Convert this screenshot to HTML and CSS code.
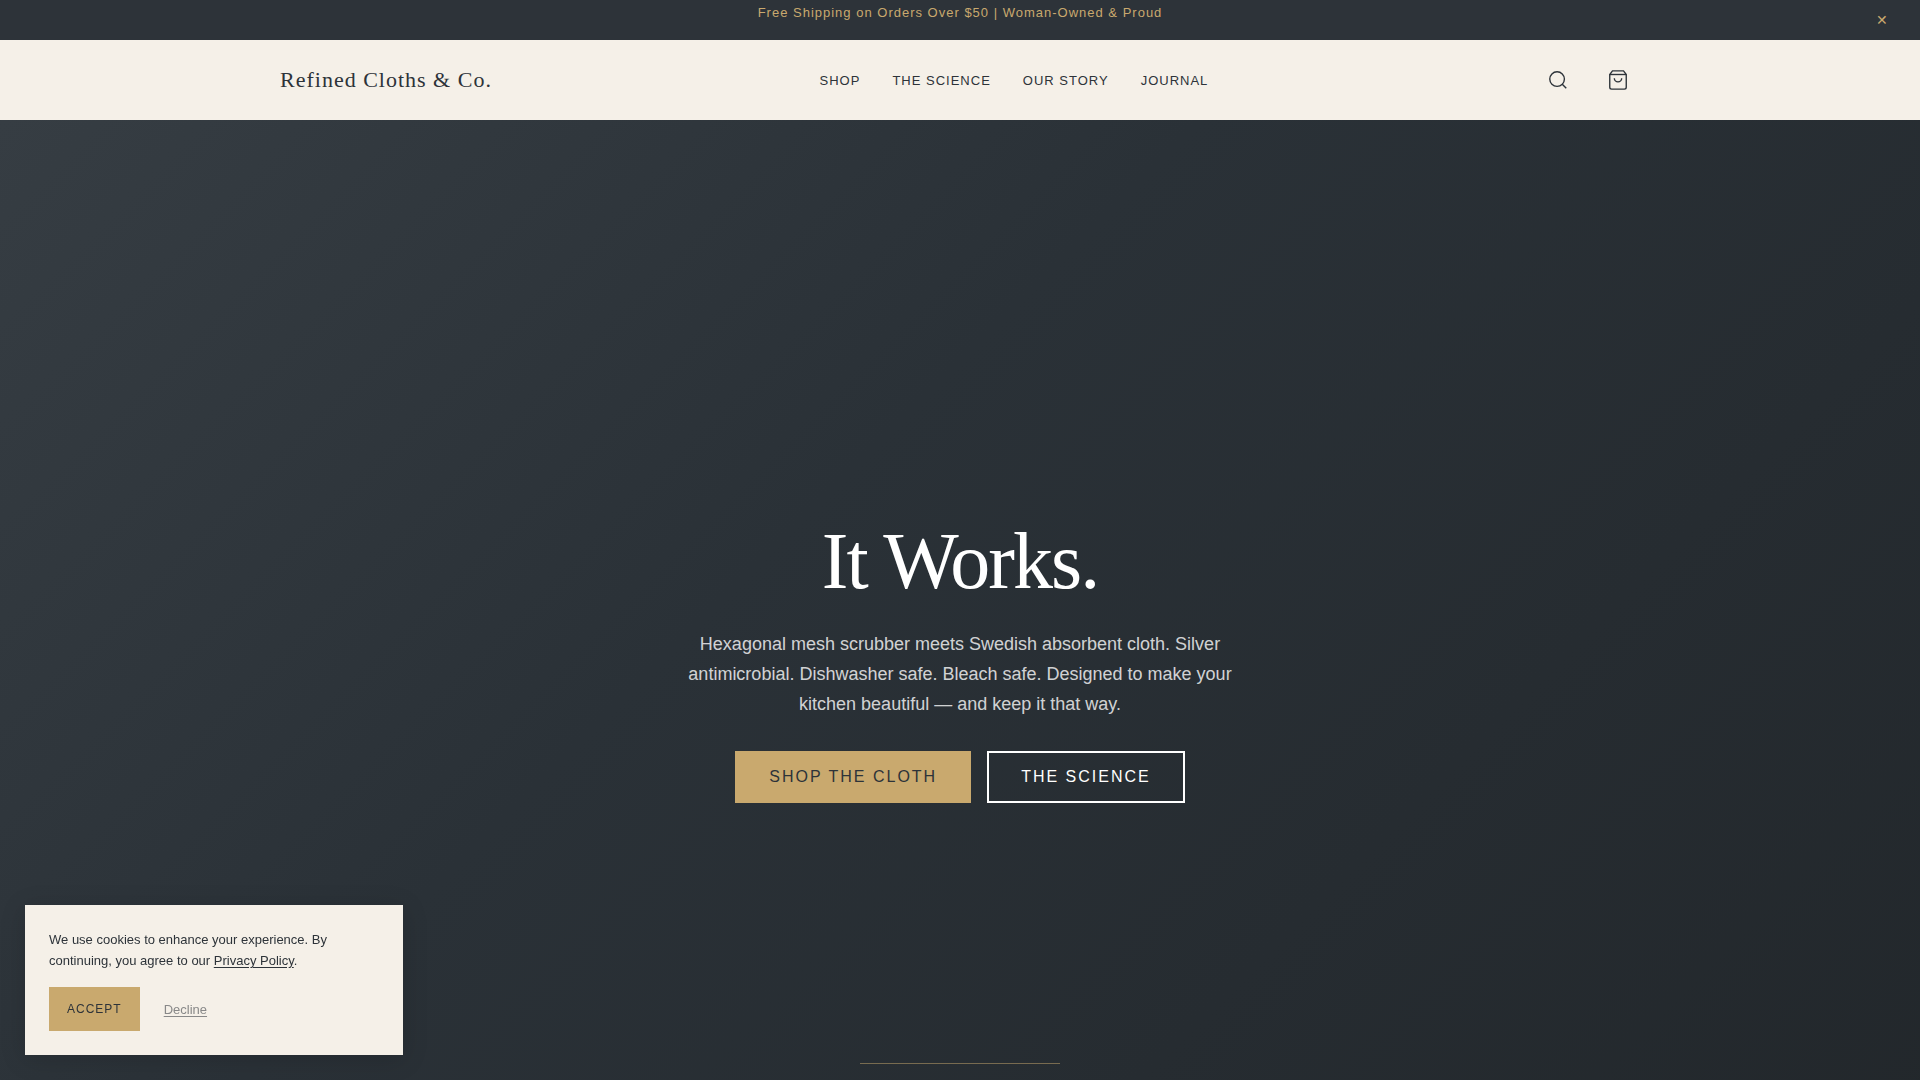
FILE: index.html
```html
<!DOCTYPE html>
<html lang="en">
<head>
    <meta charset="utf-8">
    <meta name="viewport" content="width=device-width, initial-scale=1.0">
    <title>Refined Cloths &amp; Co.</title>
    <link rel="stylesheet" href="styles.css">
</head>
<body>
<div class="announcement">
    <p>Free Shipping on Orders Over $50 | Woman-Owned &amp; Proud</p>
    <button class="announcement-close" type="button" aria-label="Close announcement">&#10005;</button>
</div>

<header class="header">
    <div class="header-inner">
        <a class="logo" href="#">Refined Cloths &amp; Co.</a>
        <nav class="nav">
            <a href="#">Shop</a>
            <a href="#">The Science</a>
            <a href="#">Our Story</a>
            <a href="#">Journal</a>
        </nav>
        <div class="header-actions">
            <button class="icon-btn" type="button" aria-label="Search">
                <svg viewBox="0 0 24 24"><circle cx="11" cy="11" r="8"/><path d="M21 21l-4.35-4.35"/></svg>
            </button>
            <button class="icon-btn" type="button" aria-label="Cart">
                <svg viewBox="0 0 24 24"><path d="M6 2L3 6v14a2 2 0 0 0 2 2h14a2 2 0 0 0 2-2V6l-3-4z"/><path d="M3 6h18"/><path d="M16 10a4 4 0 0 1-8 0"/></svg>
            </button>
        </div>
    </div>
</header>

<main class="hero">
    <div class="hero-content">
        <h1>It Works.</h1>
        <p>Hexagonal mesh scrubber meets Swedish absorbent cloth. Silver antimicrobial. Dishwasher safe. Bleach safe. Designed to make your kitchen beautiful — and keep it that way.</p>
        <div class="hero-buttons">
            <a class="btn btn-primary" href="#">Shop the Cloth</a>
            <a class="btn btn-secondary" href="#">The Science</a>
        </div>
    </div>
    <hr class="hero-line">
</main>

<aside class="cookie-banner" aria-label="Cookie notice">
    <p>We use cookies to enhance your experience. By continuing, you agree to our <a href="#">Privacy Policy</a>.</p>
    <div class="cookie-actions">
        <button class="cookie-accept" type="button">Accept</button>
        <button class="cookie-decline" type="button">Decline</button>
    </div>
</aside>
</body>
</html>
```
FILE: styles.css
```css
:root {
    --charcoal: #2d3339;
    --cream: #f5f0e8;
    --gold: #c9a96e;
    --sans: "Liberation Sans", Arial, sans-serif;
    --serif: "Liberation Serif", "Times New Roman", serif;
}

* {
    box-sizing: border-box;
    margin: 0;
    padding: 0;
}

body {
    display: flex;
    flex-direction: column;
    min-height: 100vh;
    font-family: var(--sans);
    color: var(--charcoal);
    background: var(--cream);
}

button {
    font-family: inherit;
    color: inherit;
    background: none;
    border: none;
    cursor: pointer;
}

/* Announcement bar */
.announcement {
    position: relative;
    height: 40px;
    background: var(--charcoal);
    color: var(--gold);
    font-size: 13px;
    line-height: 26px;
    letter-spacing: 1px;
    text-align: center;
}

.announcement-close {
    position: absolute;
    top: 0;
    right: 16px;
    width: 44px;
    height: 40px;
    font-size: 14px;
}

/* Header */
.header {
    padding: 0 24px;
    background: var(--cream);
}

.header-inner {
    display: flex;
    align-items: center;
    justify-content: space-between;
    max-width: 1360px;
    height: 80px;
    margin: 0 auto;
}

.logo {
    font-family: var(--serif);
    font-size: 22px;
    letter-spacing: 1px;
    color: var(--charcoal);
    text-decoration: none;
}

.nav {
    display: flex;
    gap: 32px;
}

.nav a {
    font-size: 13px;
    letter-spacing: 1px;
    text-transform: uppercase;
    color: var(--charcoal);
    text-decoration: none;
}

.header-actions {
    display: flex;
    gap: 16px;
}

.icon-btn {
    display: flex;
    align-items: center;
    justify-content: center;
    width: 44px;
    height: 44px;
}

.icon-btn svg {
    width: 22px;
    height: 22px;
    fill: none;
    stroke: currentColor;
    stroke-width: 1.5;
}

/* Hero */
.hero {
    flex: 1;
    display: flex;
    flex-direction: column;
    align-items: center;
    padding: 0 24px 16px;
    background: linear-gradient(135deg, #363d43 0%, #2a3137 40%, #22272b 100%) 0 0 / 100% 100vh;
}

.hero-content {
    flex: 1;
    display: flex;
    flex-direction: column;
    align-items: center;
    justify-content: center;
    padding-top: 136px;
    text-align: center;
    color: #fff;
}

.hero h1 {
    margin-bottom: 24px;
    font-family: var(--serif);
    font-size: 80px;
    font-weight: 400;
    line-height: 88px;
    letter-spacing: -2px;
}

.hero p {
    max-width: 560px;
    margin-bottom: 32px;
    font-size: 18px;
    line-height: 30px;
    color: rgba(255, 255, 255, 0.8);
}

.hero-buttons {
    display: flex;
    gap: 16px;
}

.btn {
    padding: 15px 32px;
    border: 2px solid #fff;
    font-size: 16px;
    line-height: 18px;
    letter-spacing: 2px;
    text-transform: uppercase;
    text-decoration: none;
}

.btn-primary {
    background: var(--gold);
    border-color: var(--gold);
    color: var(--charcoal);
}

.btn-secondary {
    color: #fff;
}

.hero-line {
    width: 200px;
    height: 1px;
    border: none;
    background: var(--gold);
    opacity: 0.5;
}

/* Cookie banner */
.cookie-banner {
    position: fixed;
    left: 25px;
    bottom: 25px;
    width: 378px;
    padding: 24px;
    background: var(--cream);
    box-shadow: 0 4px 24px rgba(0, 0, 0, 0.15);
    font-size: 13px;
    line-height: 21px;
}

.cookie-banner p {
    margin-bottom: 16px;
}

.cookie-banner a {
    color: inherit;
    text-underline-offset: 2px;
}

.cookie-actions {
    display: flex;
    align-items: center;
    gap: 24px;
}

.cookie-accept {
    height: 44px;
    padding: 0 18px;
    background: var(--gold);
    font-size: 12px;
    letter-spacing: 1px;
    text-transform: uppercase;
}

.cookie-decline {
    font-size: 13px;
    color: #888;
    text-decoration: underline;
    text-underline-offset: 2px;
}
```
